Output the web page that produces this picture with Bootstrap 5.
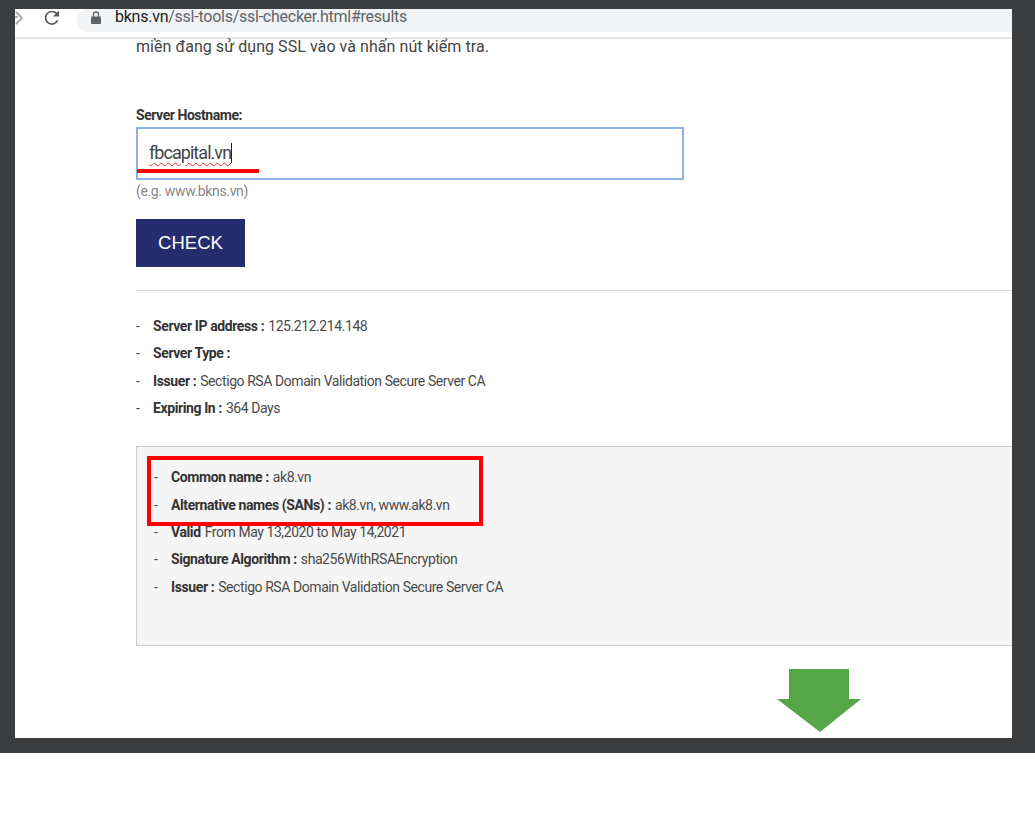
<!DOCTYPE html>
<html lang="vi">
<head>
    <meta charset="UTF-8">
    <meta name="viewport" content="width=device-width, initial-scale=1.0">
    <title>SSL Checker</title>
    <link href="https://cdn.jsdelivr.net/npm/bootstrap@5.3.0/dist/css/bootstrap.min.css" rel="stylesheet">
    <style>
        body {
            background: #fff;
            font-family: Roboto, "Liberation Sans", sans-serif;
            color: #4a4a4a;
        }
        .shot-frame {
            height: 753px;
            background: #3c3d3f;
            padding: 9px 23px 15px 15px;
        }
        .shot-inner {
            height: 729px;
            background: #fff;
        }
        .browser-bar {
            height: 30px;
            background: #fff;
            border-bottom: 2px solid #e3e4e6;
        }
        .back-arrow {
            width: 10px;
        }
        .reload-icon {
            margin-left: 18px;
            margin-right: 16px;
        }
        .url-pill {
            height: 23px;
            background: #f1f3f4;
            border-radius: 12px 0 0 12px;
            padding: 0 0 7px 14px;
            font-size: 16px;
            line-height: 16px;
            color: #5f6368;
            letter-spacing: -.25px;
        }
        .url-host {
            color: #202124;
        }
        .lock-icon {
            margin-right: 14px;
        }
        .page-body {
            position: relative;
            padding-left: 121px;
        }
        .intro-line {
            font-size: 16px;
            line-height: 18px;
            letter-spacing: .06px;
            margin: -1px 0 0;
            color: #444;
        }
        .host-label {
            font-size: 14px;
            font-weight: 700;
            line-height: 18px;
            letter-spacing: -.45px;
            margin: 50px 0 3px;
            color: #333;
        }
        .host-input {
            width: 548px;
            height: 53px;
            border: 2px solid #8db0e6;
            border-radius: 1px;
            padding: 0 0 2px 11px;
            font-size: 18px;
            letter-spacing: -.95px;
            color: #444;
            display: flex;
            align-items: center;
            text-decoration: underline wavy #e03030 1px;
            text-underline-offset: 3px;
        }
        .caret-mark {
            display: inline-block;
            width: 1px;
            height: 20px;
            background: #222;
        }
        .hint-text {
            font-size: 14px;
            line-height: 18px;
            letter-spacing: -.35px;
            color: #888;
            margin: 2px 0 19px;
        }
        .check-btn {
            width: 109px;
            height: 48px;
            background: #252d6e;
            border: 0;
            border-radius: 0;
            color: #fff;
            font-family: "Liberation Sans", sans-serif;
            font-size: 18.500px;
            padding: 0;
        }
        .check-btn:hover {
            background: #252d6e;
            color: #fff;
        }
        .split-line {
            height: 1px;
            background: #d8d8d8;
            margin: 23px 0 22px;
        }
        .info-row {
            display: flex;
            height: 27.3px;
            align-items: center;
            font-size: 14px;
            letter-spacing: -.43px;
        }
        .info-row b {
            color: #333;
            font-weight: 700;
            letter-spacing: -.4px;
            margin-right: 4px;
        }
        .dash-mark {
            width: 17px;
            flex: none;
        }
        .cert-box {
            height: 200px;
            margin-top: 24px;
            background: #f5f5f5;
            border: 1px solid #ccc;
            border-right: 0;
            padding: 17px 0 0 17px;
        }
        .red-box {
            position: absolute;
            left: 132px;
            top: 418px;
            width: 336px;
            height: 70px;
            border: 4px solid #f00;
        }
        .red-line {
            position: absolute;
            left: 122px;
            top: 131px;
            width: 122px;
            height: 4px;
            background: #f00;
        }
        .down-arrow {
            display: block;
            margin: 23px 0 0 641px;
        }
    </style>
</head>
<body>
    <div class="shot-frame">
        <div class="shot-inner">
            <div class="browser-bar d-flex align-items-start">
                <svg class="back-arrow" height="18" viewBox="0 0 10 18"><path d="M0 8h3M1 3l6 6-6 6" fill="none" stroke="#a9abae" stroke-width="2"/></svg>
                <svg class="reload-icon flex-none" width="18" height="18" viewBox="0 0 18 18"><path d="M14.6 11.4A6.3 6.3 0 1 1 13.4 4.4L15 6" fill="none" stroke="#55585c" stroke-width="1.7"/><path d="M16 1.5V7.4H10.1Z" fill="#55585c"/></svg>
                <div class="url-pill flex-grow-1 d-flex align-items-center">
                    <svg class="lock-icon" width="10" height="13" viewBox="0 0 10 13"><path d="M1 5.5h8a1 1 0 0 1 1 1V12a1 1 0 0 1-1 1H1a1 1 0 0 1-1-1V6.500a1 1 0 0 1 1-1Z" fill="#5f6368"/><path d="M2.500 6V3.500a2.500 2.500 0 0 1 5 0V6" fill="none" stroke="#5f6368" stroke-width="1.300"/></svg>
                    <span><span class="url-host">bkns.vn</span>/ssl-tools/ssl-checker.html#results</span>
                </div>
            </div>
            <div class="page-body">
                <p class="intro-line">miền đang sử dụng SSL vào và nhấn nút kiểm tra.</p>
                <div class="host-label">Server Hostname:</div>
                <div class="host-input"><span>fbcapital.vn</span><span class="caret-mark"></span></div>
                <div class="hint-text">(e.g. www.bkns.vn)</div>
                <button type="button" class="btn check-btn">CHECK</button>
                <div class="split-line"></div>
                <div class="info-row"><span class="dash-mark">-</span><b>Server IP address :</b> 125.212.214.148</div>
                <div class="info-row"><span class="dash-mark">-</span><b>Server Type :</b></div>
                <div class="info-row"><span class="dash-mark">-</span><b>Issuer :</b> Sectigo RSA Domain Validation Secure Server CA</div>
                <div class="info-row"><span class="dash-mark">-</span><b>Expiring In :</b> 364 Days</div>
                <div class="cert-box">
                    <div class="info-row"><span class="dash-mark">-</span><b>Common name :</b> ak8.vn</div>
                    <div class="info-row"><span class="dash-mark">-</span><b>Alternative names (SANs) :</b> ak8.vn, www.ak8.vn</div>
                    <div class="info-row"><span class="dash-mark">-</span><b>Valid</b> From May 13,2020 to May 14,2021</div>
                    <div class="info-row"><span class="dash-mark">-</span><b>Signature Algorithm :</b> sha256WithRSAEncryption</div>
                    <div class="info-row"><span class="dash-mark">-</span><b>Issuer :</b> Sectigo RSA Domain Validation Secure Server CA</div>
                </div>
                <svg class="down-arrow" width="84" height="63" viewBox="0 0 84 63"><path d="M12 0H72V30H84L43 63 0 30H12Z" fill="#55a647"/></svg>
                <div class="red-line"></div>
                <div class="red-box"></div>
            </div>
        </div>
    </div>
    <script src="https://cdn.jsdelivr.net/npm/bootstrap@5.3.0/dist/js/bootstrap.bundle.min.js"></script>
</body>
</html>
